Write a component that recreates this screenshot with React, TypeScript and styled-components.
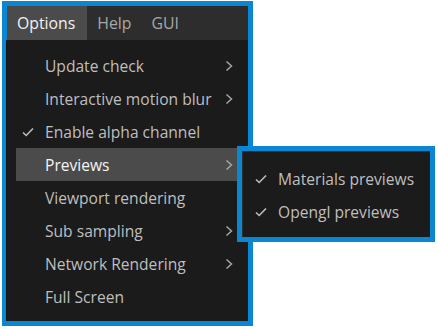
import React from 'react'
import styled, { createGlobalStyle } from 'styled-components'

const GlobalStyle = createGlobalStyle`
  body {
    margin: 0;
    background: #ffffff;
    font-family: 'Segoe UI', 'Open Sans', 'Noto Sans', sans-serif;
  }
`

const Frame = styled.div`
  margin: 1px 0 0 2px;
  width: 241px;
  border: 5px solid #0a86d2;
  background: #1b1b1b;
`

const MenuBar = styled.div`
  display: flex;
  height: 34px;
  background: #2d2d2d;
`

const MenuTitle = styled.div<{ $active?: boolean }>`
  display: flex;
  align-items: center;
  padding: ${(p) => (p.$active ? '0 12px 0 10px' : '0 10px')};
  font-size: 15.8px;
  color: ${(p) => (p.$active ? '#f2f2f2' : '#a8a8a8')};
  background: ${(p) => (p.$active ? '#4b4b4b' : 'transparent')};
`

const Dropdown = styled.div`
  display: flex;
  flex-direction: column;
  padding: 9px 9px 8px 9px;
  border-left: 1px solid #121212;
  margin-left: -1px;
`

const Item = styled.div<{ $active?: boolean }>`
  position: relative;
  display: flex;
  align-items: center;
  height: 33px;
  padding: 0 6px 0 6px;
  font-size: 15.6px;
  color: ${(p) => (p.$active ? '#f4f4f4' : '#bfbfbf')};
  background: ${(p) => (p.$active ? '#4b4b4b' : 'transparent')};
`

const CheckSlot = styled.span`
  display: flex;
  align-items: center;
  width: 23px;
  color: #bdbdbd;
`

const Label = styled.span`
  flex: 1;
  white-space: nowrap;
`

const Arrow = styled.span`
  display: flex;
  align-items: center;
  color: #a6a6a6;
`

const Submenu = styled.div`
  position: absolute;
  left: 221px;
  top: -2px;
  width: 188px;
  border: 5px solid #0a86d2;
  background: #1b1b1b;
  z-index: 2;
`

const SubInner = styled.div`
  display: flex;
  flex-direction: column;
  padding: 10px 0 8px 12px;
  border: 1px solid #2e2e2e;
  border-right-color: #1b1b1b;
  border-bottom-color: #1b1b1b;
`

const SubItem = styled.div`
  display: flex;
  align-items: center;
  height: 33px;
  font-size: 15.6px;
  color: #bfbfbf;
`

const Check = () => (
  <svg width="12" height="10" viewBox="0 0 12 10">
    <polyline points="1,5.5 4.2,8.5 11,1.5" fill="none" stroke="currentColor" strokeWidth="1.6" />
  </svg>
)

const Chevron = () => (
  <svg width="8" height="12" viewBox="0 0 8 12">
    <polyline points="1.5,1.5 6.5,6 1.5,10.5" fill="none" stroke="currentColor" strokeWidth="1.5" />
  </svg>
)

const items = [
  { label: 'Update check', sub: true },
  { label: 'Interactive motion blur', sub: true },
  { label: 'Enable alpha channel', checked: true },
  { label: 'Previews', sub: true, active: true },
  { label: 'Viewport rendering' },
  { label: 'Sub sampling', sub: true },
  { label: 'Network Rendering', sub: true },
  { label: 'Full Screen' },
]

export default function App() {
  return (
    <>
      <GlobalStyle />
      <Frame>
        <MenuBar>
          <MenuTitle $active>Options</MenuTitle>
          <MenuTitle>Help</MenuTitle>
          <MenuTitle>GUI</MenuTitle>
        </MenuBar>
        <Dropdown>
          {items.map((it) => (
            <Item key={it.label} $active={it.active}>
              <CheckSlot>{it.checked && <Check />}</CheckSlot>
              <Label>{it.label}</Label>
              {it.sub && (
                <Arrow>
                  <Chevron />
                </Arrow>
              )}
              {it.active && (
                <Submenu>
                  <SubInner>
                    <SubItem>
                      <CheckSlot>
                        <Check />
                      </CheckSlot>
                      Materials previews
                    </SubItem>
                    <SubItem>
                      <CheckSlot>
                        <Check />
                      </CheckSlot>
                      Opengl previews
                    </SubItem>
                  </SubInner>
                </Submenu>
              )}
            </Item>
          ))}
        </Dropdown>
      </Frame>
    </>
  )
}
